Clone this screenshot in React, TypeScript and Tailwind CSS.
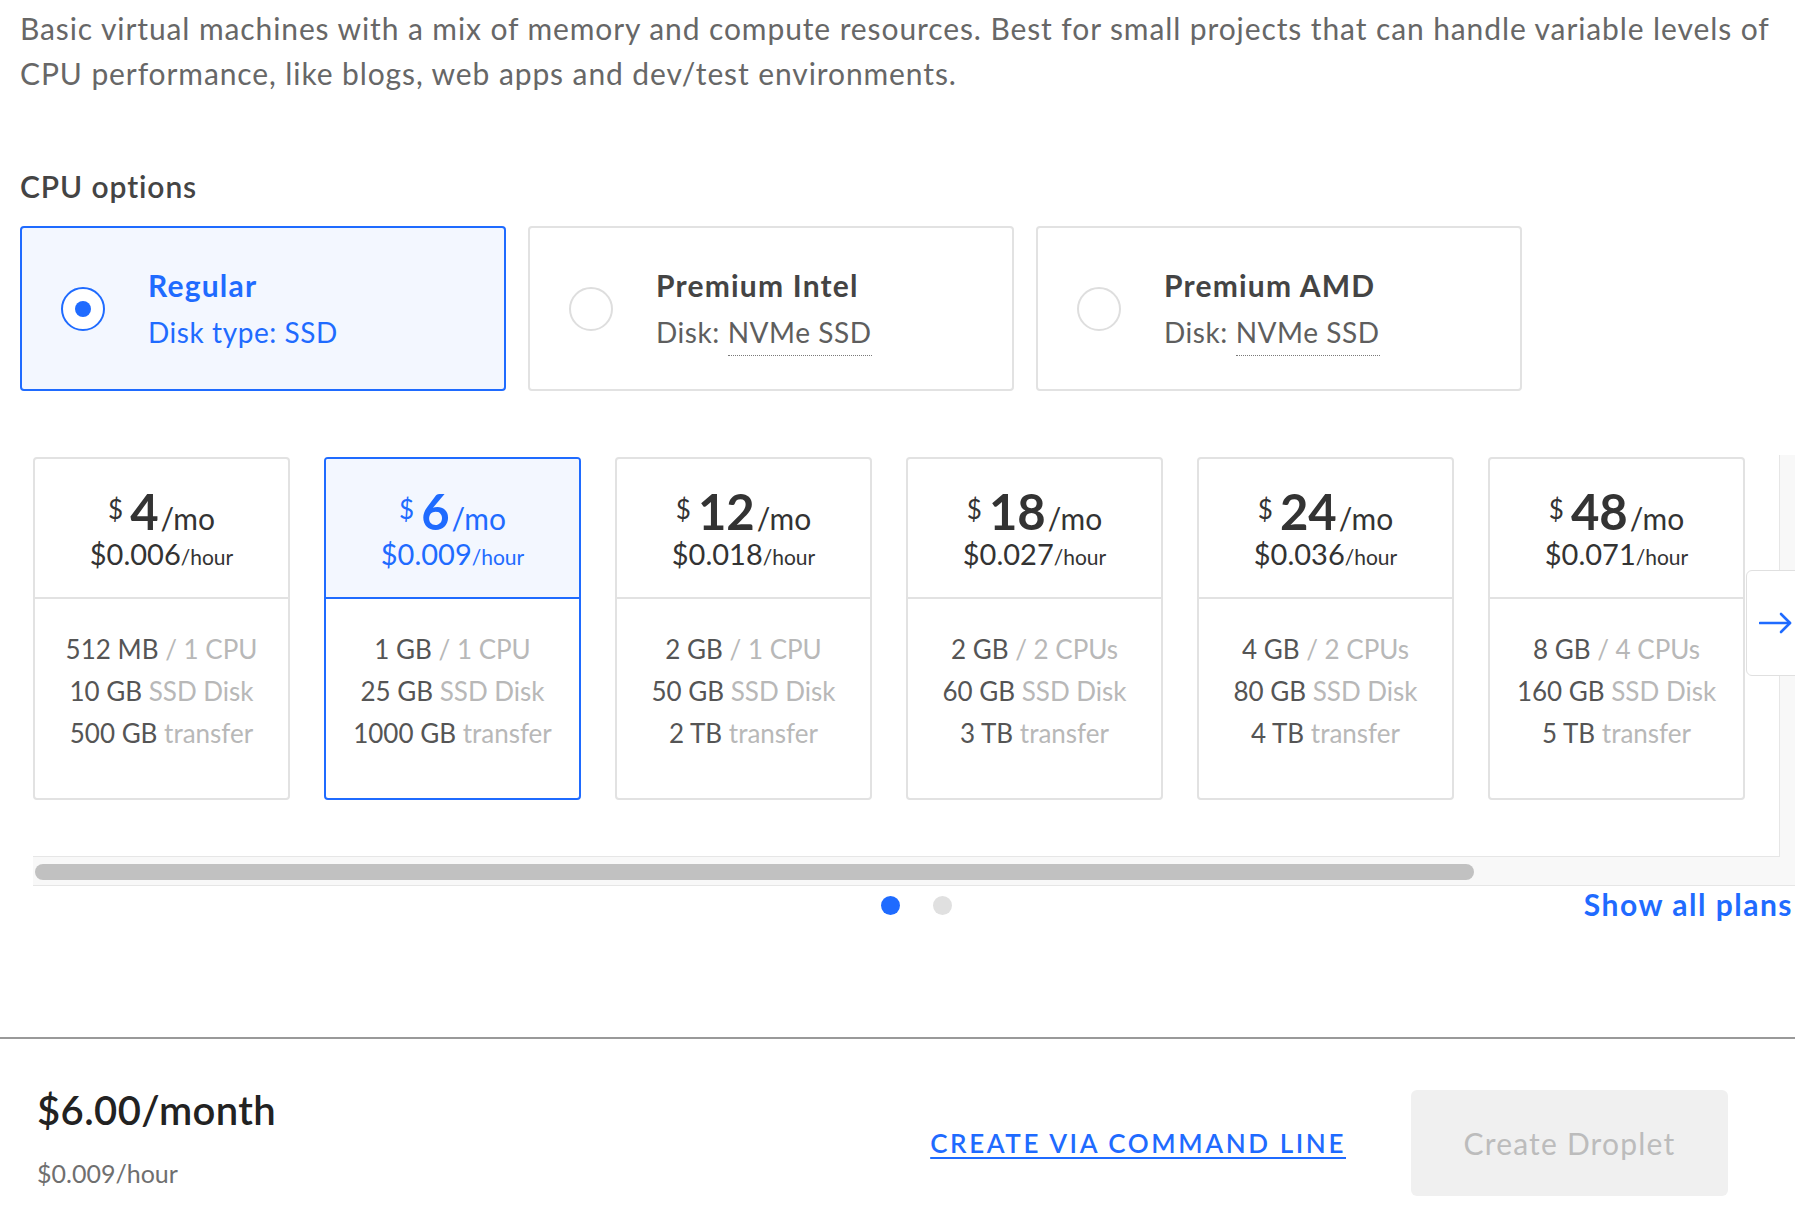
import React from "react";

type Plan = {
  mo: string;
  hr: string;
  mem: string;
  cpu: string;
  disk: string;
  transfer: string;
  selected?: boolean;
};

const plans: Plan[] = [
  { mo: "4", hr: "$0.006", mem: "512 MB", cpu: "1 CPU", disk: "10 GB", transfer: "500 GB" },
  { mo: "6", hr: "$0.009", mem: "1 GB", cpu: "1 CPU", disk: "25 GB", transfer: "1000 GB", selected: true },
  { mo: "12", hr: "$0.018", mem: "2 GB", cpu: "1 CPU", disk: "50 GB", transfer: "2 TB" },
  { mo: "18", hr: "$0.027", mem: "2 GB", cpu: "2 CPUs", disk: "60 GB", transfer: "3 TB" },
  { mo: "24", hr: "$0.036", mem: "4 GB", cpu: "2 CPUs", disk: "80 GB", transfer: "4 TB" },
  { mo: "48", hr: "$0.071", mem: "8 GB", cpu: "4 CPUs", disk: "160 GB", transfer: "5 TB" },
];

function CpuCard({
  title,
  sub,
  dotted,
  selected,
}: {
  title: string;
  sub: string;
  dotted?: string;
  selected?: boolean;
}) {
  return (
    <div
      className={
        selected
          ? "w-[486px] h-[165px] shrink-0 rounded-[4px] border-2 border-[#1f6bff] bg-[#f3f7ff] flex items-center pl-[39px]"
          : "w-[486px] h-[165px] shrink-0 rounded-[4px] border-2 border-[#e2e2e2] bg-white flex items-center pl-[39px]"
      }
    >
      {selected ? (
        <div className="w-[44px] h-[44px] rounded-full border-2 border-[#1f6bff] bg-white flex items-center justify-center">
          <div className="w-[16px] h-[16px] rounded-full bg-[#1f6bff]" />
        </div>
      ) : (
        <div className="w-[44px] h-[44px] rounded-full border-2 border-[#dedede] bg-white" />
      )}
      <div className="ml-[43px] flex flex-col">
        <div
          className={
            selected
              ? "text-[30px] leading-[47px] font-bold tracking-[0.04em] text-[#1f6bff]"
              : "text-[30px] leading-[47px] font-bold tracking-[0.04em] text-[#444444]"
          }
        >
          {title}
        </div>
        <div
          className={
            selected
              ? "text-[28px] leading-[47px] tracking-[0.02em] text-[#1f6bff]"
              : "text-[28px] leading-[47px] tracking-[0.02em] text-[#5e5e5e]"
          }
        >
          {sub}
          {dotted ? (
            <span className="border-b border-dotted border-[#7a7a7a] pb-[6px]">{dotted}</span>
          ) : null}
        </div>
      </div>
    </div>
  );
}

function PlanCard({ p }: { p: Plan }) {
  const sel = !!p.selected;
  return (
    <div
      className={
        sel
          ? "w-[257px] h-[343px] shrink-0 rounded-[4px] border-2 border-[#1f6bff] bg-white flex flex-col overflow-hidden"
          : "w-[257px] h-[343px] shrink-0 rounded-[4px] border-2 border-[#e2e2e2] bg-white flex flex-col overflow-hidden"
      }
    >
      <div
        className={
          sel
            ? "h-[140px] shrink-0 border-b-2 border-[#1f6bff] bg-[#f3f7ff] text-[#1f6bff] flex flex-col items-center pt-[27px]"
            : "h-[140px] shrink-0 border-b-2 border-[#e2e2e2] text-[#333333] flex flex-col items-center pt-[27px]"
        }
      >
        <div className="flex items-baseline">
          <span className="self-start mt-[10px] text-[26px] leading-[26px] mr-[7px]">$</span>
          <span className="text-[49px] leading-[50px] font-bold">{p.mo}</span>
          <span className="text-[30px] leading-[50px] ml-[2px]">/mo</span>
        </div>
        <div className="mt-[-5px] flex items-baseline leading-[32px]">
          <span className="text-[29px]">{p.hr}</span>
          <span className="text-[21px]">/hour</span>
        </div>
      </div>
      <div className="flex flex-col items-center pt-[29px] text-[26px] leading-[42px] text-[#555555]">
        <div>
          {p.mem} <span className="text-[#b8b8b8]">/ {p.cpu}</span>
        </div>
        <div>
          {p.disk} <span className="text-[#b8b8b8]">SSD Disk</span>
        </div>
        <div>
          {p.transfer} <span className="text-[#b8b8b8]">transfer</span>
        </div>
      </div>
    </div>
  );
}

export default function App() {
  return (
    <div className="w-full min-h-[1209px] bg-white overflow-hidden font-['Lato',sans-serif]">
      <div className="pl-[20px] pt-[6px] text-[30px] leading-[45px] tracking-[0.03em] text-[#676767] whitespace-nowrap">
        Basic virtual machines with a mix of memory and compute resources. Best for small projects that can handle variable levels of
        <br />
        CPU performance, like blogs, web apps and dev/test environments.
      </div>

      <div className="pl-[20px] mt-[72px] text-[30px] leading-[36px] tracking-[0.03em] font-semibold text-[#444444]">
        CPU options
      </div>

      <div className="pl-[20px] mt-[22px] flex gap-[22px]">
        <CpuCard title="Regular" sub="Disk type: SSD" selected />
        <CpuCard title="Premium Intel" sub="Disk: " dotted="NVMe SSD" />
        <CpuCard title="Premium AMD" sub="Disk: " dotted="NVMe SSD" />
      </div>

      <div className="ml-[33px] mt-[64px] relative">
        <div className="flex h-[402px]">
          <div className="flex-1 overflow-hidden border-b border-[#e6e6e6] pt-[2px]">
            <div className="flex gap-[34px]">
              {plans.map((p, i) => (
                <PlanCard key={i} p={p} />
              ))}
            </div>
          </div>
          <div className="w-[16px] shrink-0 bg-[#f8f8f8] border-l border-[#e6e6e6]" />
        </div>
        <div className="h-[29px] bg-[#f8f8f8] border-b border-[#e6e6e6] pt-[7px] pl-[2px]">
          <div className="w-[1439px] h-[16px] rounded-full bg-[#c1c1c1]" />
        </div>

        <div className="absolute left-[1713px] top-[115px] w-[64px] h-[106px] bg-white border border-[#e0e0e0] rounded-l-[6px] flex items-center pl-[12px]">
          <svg width="34" height="24" viewBox="0 0 34 24" fill="none">
            <path d="M1 12 H31" stroke="#1f6bff" strokeWidth="2.6" strokeLinecap="round" />
            <path d="M22 3 L31 12 L22 21" stroke="#1f6bff" strokeWidth="2.6" strokeLinecap="round" strokeLinejoin="round" />
          </svg>
        </div>

        <div className="grid grid-cols-[1fr_auto_1fr] items-center h-[36px]">
          <div />
          <div className="flex items-center gap-[33px] pt-[2px] ml-[4px]">
            <div className="w-[19px] h-[19px] rounded-full bg-[#1f6bff]" />
            <div className="w-[19px] h-[19px] rounded-full bg-[#e0e0e0]" />
          </div>
          <div className="justify-self-end pr-[2px] text-[30px] leading-[36px] tracking-[0.05em] font-bold text-[#1f6bff] whitespace-nowrap">
            Show all plans
          </div>
        </div>
      </div>

      <div className="mt-[115px] h-[2px] bg-[#999999]" />

      <div className="flex items-start justify-between pl-[37px] pr-[67px] pt-[48px]">
        <div className="flex flex-col">
          <div className="text-[40px] leading-[46px] tracking-[0.01em] font-semibold text-[#222222]">$6.00/month</div>
          <div className="mt-[25px] text-[25px] leading-[30px] text-[#6f6f6f]">$0.009/hour</div>
        </div>
        <div className="flex items-center gap-[65px] mt-[3px]">
          <div className="text-[26px] leading-[30px] font-semibold tracking-[0.1em] text-[#1f6bff] underline underline-offset-[4px] decoration-2">
            CREATE VIA COMMAND LINE
          </div>
          <div className="w-[317px] h-[106px] rounded-[6px] bg-[#f0f0f0] flex items-center justify-center text-[30px] tracking-[0.04em] text-[#bcbcbc]">
            Create Droplet
          </div>
        </div>
      </div>
    </div>
  );
}
